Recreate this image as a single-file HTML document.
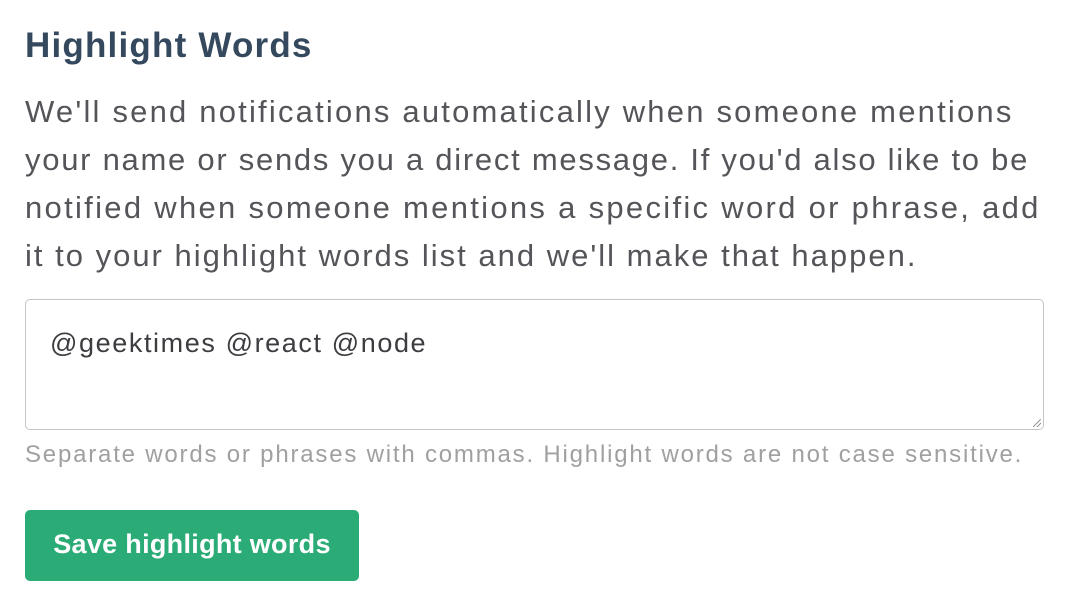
<!DOCTYPE html>
<html><head><meta charset="utf-8"><style>
html,body{margin:0;padding:0;background:#fff;width:1089px;height:594px;overflow:hidden}
body{font-family:"Liberation Sans",Arial,sans-serif;position:relative}
.h{position:absolute;left:25px;top:26px;font-size:35px;font-weight:bold;color:#34495e;white-space:nowrap;letter-spacing:1.2px}
.p{position:absolute;left:25px;top:88px;font-size:31px;line-height:48px;color:#555459;white-space:nowrap;letter-spacing:2.2px}
.p div{height:48px}
.ta{position:absolute;left:25px;top:299px;width:1019px;height:131px;border:1px solid #c5c5c5;border-radius:5px;box-sizing:border-box}
.ta span{position:absolute;left:24px;top:28px;font-size:27px;color:#3d3c40;letter-spacing:1.6px}
.ta .g{position:absolute;right:2px;bottom:2px;width:8px;height:8px;background:linear-gradient(135deg,transparent 45%,#999 45%,#999 55%,transparent 55%,transparent 70%,#999 70%,#999 80%,transparent 80%)}
.hint{position:absolute;left:25px;top:441px;font-size:24px;color:#a0a0a2;white-space:nowrap;letter-spacing:1.8px}
.btn{position:absolute;left:25px;top:510px;width:334px;height:71px;background:#2bac76;border-radius:5px;color:#fff;font-weight:bold;font-size:27px;line-height:69px;text-align:center;letter-spacing:0.3px}
</style></head><body>
<div class="h">Highlight Words</div>
<div class="p"><div>We'll send notifications automatically when someone mentions</div><div style="letter-spacing:1.73px">your name or sends you a direct message. If you'd also like to be</div><div style="letter-spacing:2.3px">notified when someone mentions a specific word or phrase, add</div><div style="letter-spacing:2.0px">it to your highlight words list and we'll make that happen.</div></div>
<div class="ta"><span>@geektimes @react @node</span><div class="g"></div></div>
<div class="hint">Separate words or phrases with commas. Highlight words are not case sensitive.</div>
<div class="btn">Save highlight words</div>
</body></html>
